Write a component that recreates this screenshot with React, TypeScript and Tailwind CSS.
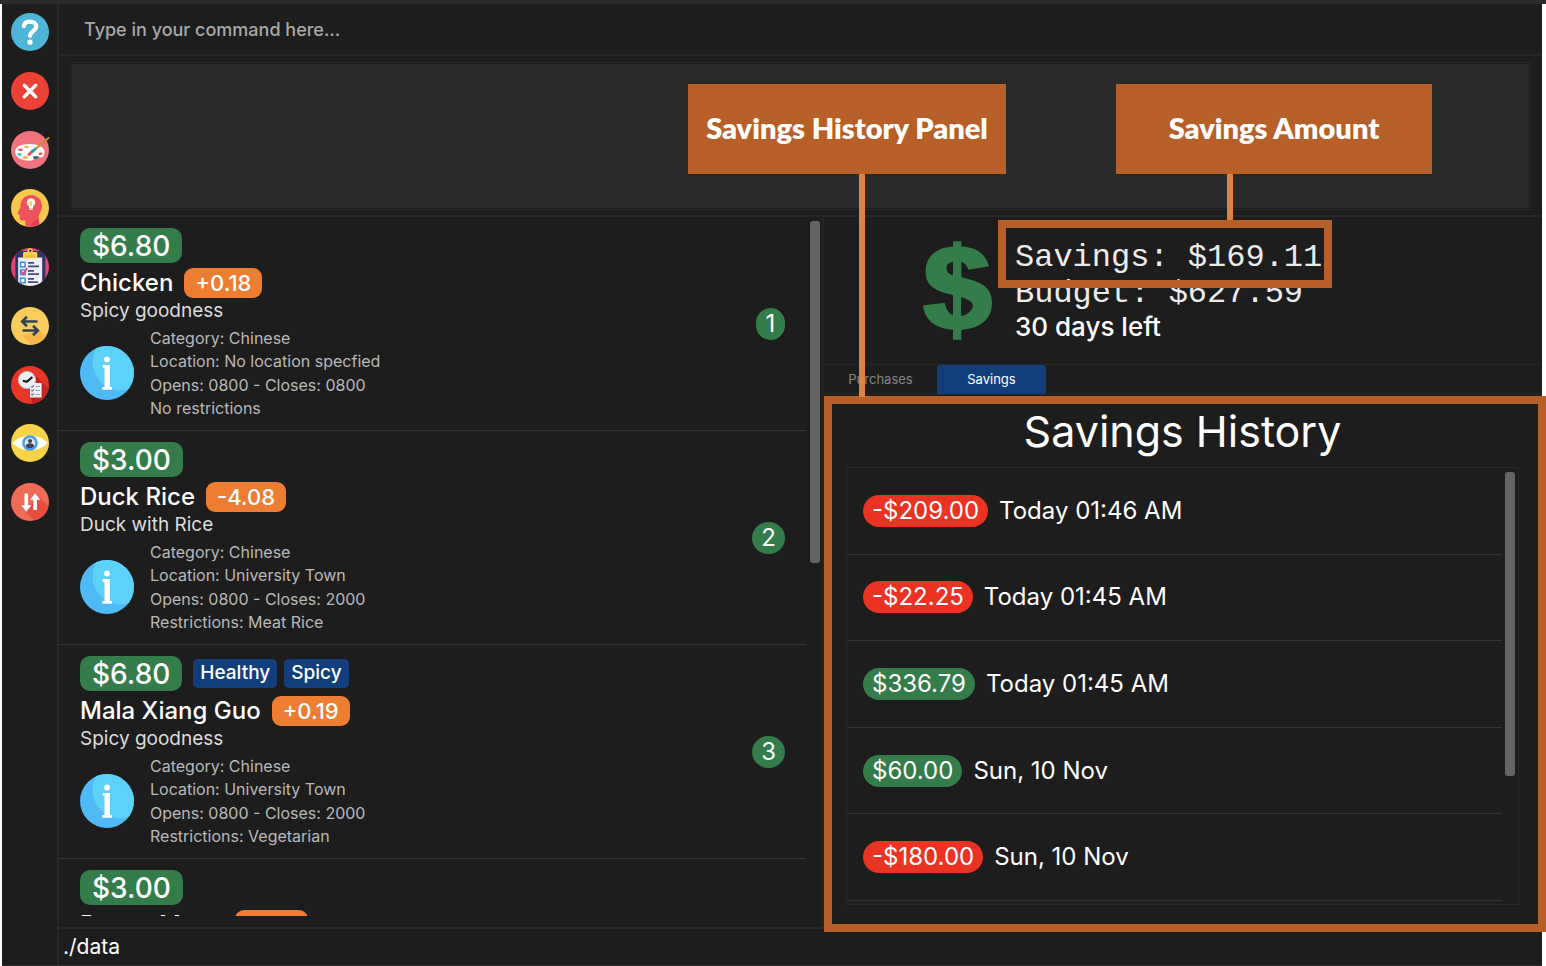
import React from "react";

type Food = {
  price: string;
  name: string;
  score: string;
  summary: string;
  tags: string[];
  details: string[];
};

const foods: Food[] = [
  {
    price: "$6.80",
    name: "Chicken",
    score: "+0.18",
    summary: "Spicy goodness",
    tags: [],
    details: ["Category: Chinese", "Location: No location specfied", "Opens: 0800 - Closes: 0800", "No restrictions"],
  },
  {
    price: "$3.00",
    name: "Duck Rice",
    score: "-4.08",
    summary: "Duck with Rice",
    tags: [],
    details: ["Category: Chinese", "Location: University Town", "Opens: 0800 - Closes: 2000", "Restrictions: Meat Rice"],
  },
  {
    price: "$6.80",
    name: "Mala Xiang Guo",
    score: "+0.19",
    summary: "Spicy goodness",
    tags: ["Healthy", "Spicy"],
    details: ["Category: Chinese", "Location: University Town", "Opens: 0800 - Closes: 2000", "Restrictions: Vegetarian"],
  },
  {
    price: "$3.00",
    name: "Prawn Menu",
    score: "-4.12",
    summary: "",
    tags: [],
    details: [],
  },
];

const savings = [
  { amount: "-$209.00", date: "Today 01:46 AM" },
  { amount: "-$22.25", date: "Today 01:45 AM" },
  { amount: "$336.79", date: "Today 01:45 AM" },
  { amount: "$60.00", date: "Sun, 10 Nov" },
  { amount: "-$180.00", date: "Sun, 10 Nov" },
];

function Disc({ id, fill, children }: { id: string; fill: string; children: React.ReactNode }) {
  return (
    <svg viewBox="0 0 38 38" className="size-[38px]" aria-hidden="true">
      <clipPath id={id}>
        <circle cx="19" cy="19" r="19" />
      </clipPath>
      <g clipPath={`url(#${id})`}>
        <rect width="38" height="38" fill={fill} />
        {children}
      </g>
    </svg>
  );
}

const tools: { label: string; icon: React.ReactNode }[] = [
  {
    label: "Help",
    icon: (
      <Disc id="help" fill="#4db6d6">
        <path d="M12.800 13.200C13 9.800 15.500 8.600 18.800 8.600c3.900 0 6.400 1.900 6.400 5 0 4.400-6.200 4.600-6.200 9.200" fill="none" stroke="#fff" strokeWidth="4.200" strokeLinecap="round" />
        <circle cx="19" cy="29.200" r="2.600" fill="#fff" />
      </Disc>
    ),
  },
  {
    label: "Exit",
    icon: (
      <Disc id="exit" fill="#ee4136">
        <path d="M13.300 13.300l11.400 11.400M24.700 13.300L13.300 24.700" stroke="#fff" strokeWidth="3.400" strokeLinecap="round" />
      </Disc>
    ),
  },
  {
    label: "Theme",
    icon: (
      <svg viewBox="0 0 38 38" className="size-[38px]" aria-hidden="true" overflow="visible">
        <circle cx="19" cy="19" r="19" fill="#f0727c" />
        <path d="M4 20.500c0-4.500 6-7.500 14.500-7.500S33.500 16 33.500 21c0 3-1.500 5.500-3.500 5.500-1.600 0-2-1.500-3.600-1.500-2.400 0-2 4.700-8 4.700C10 29.700 4 26 4 20.500z" fill="#fff" />
        <ellipse cx="15.500" cy="16" rx="2.300" ry="1.300" fill="#f6b93b" />
        <ellipse cx="9.500" cy="18.800" rx="2.400" ry="1.400" fill="#ee5565" />
        <ellipse cx="8.500" cy="23.500" rx="2.400" ry="1.400" fill="#45c4c9" />
        <ellipse cx="14.500" cy="26.500" rx="2.500" ry="1.400" fill="#f6b93b" />
        <ellipse cx="24.500" cy="26.500" rx="2.600" ry="1.500" fill="#1f6f86" />
        <ellipse cx="29.500" cy="22.800" rx="2" ry="1.300" fill="#ee5565" />
        <path d="M18 23.500l3.500-3.500" stroke="#ee5565" strokeWidth="3" strokeLinecap="round" />
        <path d="M21 21l4.500-4" stroke="#2a9aa8" strokeWidth="2.800" />
        <path d="M25 17.400L37.500 7" stroke="#c8912c" strokeWidth="2" strokeLinecap="round" />
      </svg>
    ),
  },
  {
    label: "Suggest",
    icon: (
      <Disc id="idea" fill="#f8c84c">
        <path d="M14.500 38V31.500h-3.600c-1.800 0-2.400-1-2.300-2.500l.2-3-1.800-1c-.8-.4-.7-.9-.3-1.600l2.700-5C9.300 11 13.500 6 20 6c6.500 0 11 5 11 11.500 0 4.500-3.500 7.500-3.500 11.500 0 3 .8 6 2 9z" fill="#ee525c" />
        <path d="M27.500 29c0 3 .8 6 2 9h-9c0-5 3.500-6 7-9z" fill="#dc3f4d" />
        <circle cx="20" cy="13.500" r="4.300" fill="#fff3d6" />
        <path d="M18 16h4v3.400h-4z" fill="#fff" />
        <path d="M20 12v5" stroke="#f6b93b" strokeWidth="1.400" />
        <path d="M18.300 20.300h3.400" stroke="#d9dde6" strokeWidth="1.400" />
      </Disc>
    ),
  },
  {
    label: "List",
    icon: (
      <Disc id="list" fill="#e8417c">
        <rect x="4.300" y="3" width="30" height="38" rx="2.500" fill="#2f3566" />
        <rect x="7.200" y="9.500" width="24" height="32" fill="#eef1f7" />
        <path d="M12 10.500V5.500c0-1 .6-1.600 1.500-1.600h2.800C16.500 1 17.500 0 19 0s2.600 1 2.800 3.900h3c.9 0 1.500.6 1.500 1.600v5z" fill="#f8cf52" />
        <path d="M14.500 8h9.500" stroke="#e0aa2c" strokeWidth="1" />
        <circle cx="19.200" cy="2.800" r="1.200" fill="#2f3566" />
        <g fill="#fff" stroke="#3c8fd8" strokeWidth="1.500">
          <rect x="9.500" y="14.300" width="4.600" height="4.600" />
          <rect x="9.500" y="22" width="4.600" height="4.600" />
          <rect x="9.500" y="30.200" width="4.600" height="4.600" />
        </g>
        <path d="M9.800 23l2.400 3 4-6" fill="none" stroke="#e8417c" strokeWidth="2" />
        <path d="M17 14.800h6M17 18.300h11M17 22.800h6M17 26.200h11M17 30.800h6M17 34.200h10" stroke="#454b82" strokeWidth="1.700" />
      </Disc>
    ),
  },
  {
    label: "Transfer",
    icon: (
      <Disc id="transfer" fill="#f9cd5b">
        <path d="M28 23l10 9v8H22L12 29z" fill="#f5b548" />
        <path d="M11 14.500h15.500M16 9.800l-4.800 4.700 4.800 4.700M27 23.500H11.500M22 18.800l4.800 4.700-4.800 4.700" fill="none" stroke="#2f4257" strokeWidth="2.600" />
      </Disc>
    ),
  },
  {
    label: "Schedule",
    icon: (
      <Disc id="schedule" fill="#ea3529">
        <path d="M23 8l15 15v15H22l-3-8z" fill="#c02520" />
        <circle cx="16" cy="14" r="8.600" fill="#e9eef0" stroke="#b9bfc2" strokeWidth="1" />
        <path d="M11.800 14.800l4 1 5.600-4.800" fill="none" stroke="#1d1d1d" strokeWidth="2.200" />
        <rect x="19" y="17" width="11.600" height="14.500" fill="#f0effb" />
        <path d="M24.500 20.500h4.500M24.500 24.500h4.500M24.500 28.500h4.500" stroke="#9da3c4" strokeWidth="1" />
        <path d="M20.300 20.400l.9.900 1.500-2M20.300 24.400l.9.900 1.500-2M20.300 28.400l.9.900 1.500-2" fill="none" stroke="#34343c" strokeWidth="1" />
      </Disc>
    ),
  },
  {
    label: "View",
    icon: (
      <Disc id="view" fill="#f8d347">
        <path d="M1.500 19C6 14.200 12 11.800 19 11.800S32 14.200 36.500 19C32 23.800 26 26.200 19 26.200S6 23.800 1.500 19z" fill="#fff" />
        <circle cx="19" cy="19" r="7.800" fill="#4c9ede" />
        <circle cx="19" cy="19" r="5.300" fill="#dfe7ee" />
        <circle cx="19" cy="17" r="2.100" fill="#3b4256" />
        <path d="M14.800 22.200c.4-2.200 2-3 4.200-3s3.800.8 4.200 3c-1.100 1.400-2.600 2.100-4.200 2.100s-3.100-.7-4.200-2.100z" fill="#3b4256" />
      </Disc>
    ),
  },
  {
    label: "Sort",
    icon: (
      <Disc id="sort" fill="#ef6a57">
        <path d="M26 12l12 12v14H24l-9-9z" fill="#e84e3d" />
        <path d="M13.500 10.500h3.600v11.700h3.300l-5.100 6.500-5.100-6.500h3.300z" fill="#fff" />
        <path d="M22.300 27V16.800h-3.200L24.100 10.300l5.200 6.500H26V27z" fill="#fff" />
      </Disc>
    ),
  },
];

function InfoIcon({ id }: { id: string }) {
  return (
    <svg viewBox="0 0 54 54" className="size-[54px] shrink-0" aria-hidden="true">
      <clipPath id={id}>
        <circle cx="27" cy="27" r="27" />
      </clipPath>
      <g clipPath={`url(#${id})`}>
        <rect width="54" height="54" fill="#4fbaf6" />
        <circle cx="41" cy="16" r="28.500" fill="#5cd2fa" />
      </g>
      <circle cx="27" cy="13.500" r="2.900" fill="#fff" />
      <path d="M22.700 19h7.300v22h2v2.700h-9.700V41h2.200V21.700h-1.800z" fill="#fff" />
    </svg>
  );
}

function FoodCard({ food, index }: { food: Food; index: number }) {
  return (
    <li className="flex h-[214px] shrink-0 items-center justify-between border-b border-[#363636] px-[21px]">
      <div className="h-full pt-[11px]">
        <div className="flex items-center gap-[11px]">
          <span className="flex h-[35px] items-center rounded-[10px] bg-[#347c49] px-3 text-[28px] font-medium">{food.price}</span>
          {food.tags.length > 0 && (
            <span className="flex gap-[7px]">
              {food.tags.map((tag) => (
                <span key={tag} className="flex h-[29px] items-center rounded-[5px] bg-[#133e7c] px-[7px] text-[19px] font-medium">
                  {tag}
                </span>
              ))}
            </span>
          )}
        </div>
        <div className="mt-[5px] flex h-[30px] items-center gap-[11px]">
          <span className="text-[24px] font-medium">{food.name}</span>
          <span className="flex h-[30px] items-center rounded-[9px] bg-[#ed7d31] px-[11px] text-[22px] font-medium">{food.score}</span>
        </div>
        <p className="h-[28px] pt-px text-[19px] leading-[23px] text-[#dcdcdc]">{food.summary}</p>
        <div className="flex items-center gap-4">
          <InfoIcon id={`info-${index}`} />
          <ul className="grid h-[94px] auto-rows-fr items-center text-[16px] leading-[22px] text-[#b9b9b9]">
            {food.details.map((line) => (
              <li key={line}>{line}</li>
            ))}
          </ul>
        </div>
      </div>
      <span className="flex h-8 min-w-[29px] items-center justify-center rounded-full bg-[#347c49] px-[9px] text-[24px]">{index}</span>
    </li>
  );
}

export default function App() {
  return (
    <div className="relative h-screen bg-white font-['Inter',sans-serif] text-white">
      <div className="h-1 bg-[#2b2b2b]" />
      <div className="mr-1 ml-[2px] flex h-[calc(100%-4px)] border-b border-[#2e2e2e] bg-[#1d1d1d]">
        <nav className="w-[57px] shrink-0 border-r-2 border-[#272727] pt-[9px] pl-[9px]">
          <div className="flex h-[508px] flex-col items-start justify-between">
            {tools.map((tool) => (
              <button key={tool.label} type="button" aria-label={tool.label} className="block">
                {tool.icon}
              </button>
            ))}
          </div>
        </nav>

        <div className="flex min-w-0 flex-1 flex-col">
          <header className="h-[52px] shrink-0 border-b-2 border-[#272727]">
            <input
              type="text"
              aria-label="Command"
              placeholder="Type in your command here..."
              className="h-full w-full bg-transparent px-[25px] pt-px text-[18px] font-medium outline-none placeholder:text-[#a9a9a9]"
            />
          </header>

          <div className="h-[161px] shrink-0 border-b-2 border-[#272727] px-[11px] pt-[6px] pb-[5px]">
            <div className="h-full border border-[#272727] p-px">
              <div className="h-full bg-[#2a2a2a]" />
            </div>
          </div>

          <div className="flex min-h-0 flex-1">
            <section aria-label="Food list" className="flex w-[765px] shrink-0 border-r-2 border-[#252525] pb-[11px]">
              <ol className="flex min-w-0 flex-1 flex-col overflow-hidden">
                {foods.map((food, i) => (
                  <FoodCard key={i} food={food} index={i + 1} />
                ))}
              </ol>
              <div className="w-4 pt-1 pl-1">
                <div className="h-[342px] w-[10px] rounded-[3px] bg-[#646464]" />
              </div>
            </section>

            <section aria-label="Finances" className="flex min-w-0 flex-1 flex-col">
              <div className="flex h-[147px] shrink-0 gap-[23px] pt-6 pl-[99px]">
                <svg viewBox="550 122 207 296" className="h-[99px] w-[69px] shrink-0" fill="#347c49" aria-hidden="true">
                  <path d="M748 197C737 157 706 137 653 137C592 137 558 166 558 213C558 258 588 271 640 284C680 292 700 300 700 318C692 336 680 347 653 347C630 347 620 330 615 307L550 315C556 362 590 388 653 388C720 388 757 356 757 308C757 255 720 243 665 230C635 224 621 217 621 203C621 190 632 182 653 182C672 182 680 190 686 208Z" />
                  <path d="M640 122H665V418H640Z" />
                  <path d="M640 184V224C628 220 621 214 621 203C621 192 629 187 640 184ZM665 291C684 297 692 305 692 318C692 332 684 342 665 346Z" fill="#1d1d1d" />
                </svg>
                <div>
                  <p className="relative h-9 font-['Liberation_Mono',monospace] text-[32px] leading-[34px] whitespace-pre text-[#ececec]">
                    Savings: $169.11
                    <span className="absolute -top-[21px] -right-[10px] -left-[17px] z-10 h-[68px] border-8 border-[#b75f28]" />
                  </p>
                  <p className="h-[33px] font-['Liberation_Mono',monospace] text-[32px] leading-[34px] whitespace-pre text-[#ececec]">
                    Budget: $627.59
                  </p>
                  <p className="text-[26px] leading-[34px] font-medium">30 days left</p>
                </div>
              </div>

              <div className="h-8 shrink-0 border-t border-[#272727]">
                <div role="tablist" className="flex h-[30px] border-b border-[#272727] text-[13px]">
                  <button type="button" role="tab" aria-selected="false" className="w-[113px] text-[#858585]">
                    Purchases
                  </button>
                  <button type="button" role="tab" aria-selected="true" className="w-[109px] rounded-t-[3px] bg-[#133e7c]">
                    Savings
                  </button>
                </div>
              </div>

              <div className="relative flex min-h-0 flex-1 flex-col pt-[12px] pr-[23px] pb-[22px] pl-[22px]">
                <div className="absolute top-0 -right-1 -bottom-[5px] left-0 z-10 border-8 border-[#b75f28]" />
                <h1 className="h-[59px] text-center text-[43px] leading-[46px]">Savings History</h1>
                <div className="flex min-h-0 flex-1 border border-[#282828] pb-[3px]">
                  <ul className="grid flex-1 auto-rows-fr">
                    {savings.map((entry, i) => (
                      <li key={i} className="flex items-center gap-[11px] border-b border-[#343434] pl-4 text-[24px]">
                        <span
                          className={`flex h-8 items-center rounded-full px-[9px] ${
                            entry.amount.startsWith("-") ? "bg-[#ea3323]" : "bg-[#347c49]"
                          }`}
                        >
                          {entry.amount}
                        </span>
                        <span>{entry.date}</span>
                      </li>
                    ))}
                  </ul>
                  <div className="w-4 pt-1 pl-[3px]">
                    <div className="h-[304px] w-[10px] rounded-[3px] bg-[#646464]" />
                  </div>
                </div>
              </div>
            </section>
          </div>

          <footer className="h-[38px] shrink-0 border-t-2 border-[#272727] pl-1 text-[21px] leading-[36px]">./data</footer>
        </div>
      </div>

      <div className="absolute top-[174px] left-[859px] z-20 h-[223px] w-[6px] bg-[#dd8244]" />
      <div className="absolute top-[174px] left-[1227px] z-20 h-[46px] w-[6px] bg-[#dd8244]" />
      <div className="absolute top-[84px] left-[688px] flex h-[90px] w-[318px] items-center justify-center bg-[#b75f28] pb-[2px] font-['Lato',sans-serif] text-[29px] font-extrabold whitespace-nowrap">
        Savings History Panel
      </div>
      <div className="absolute top-[84px] left-[1116px] flex h-[90px] w-[316px] items-center justify-center bg-[#b75f28] pb-[2px] font-['Lato',sans-serif] text-[29px] font-extrabold whitespace-nowrap">
        Savings Amount
      </div>
    </div>
  );
}
